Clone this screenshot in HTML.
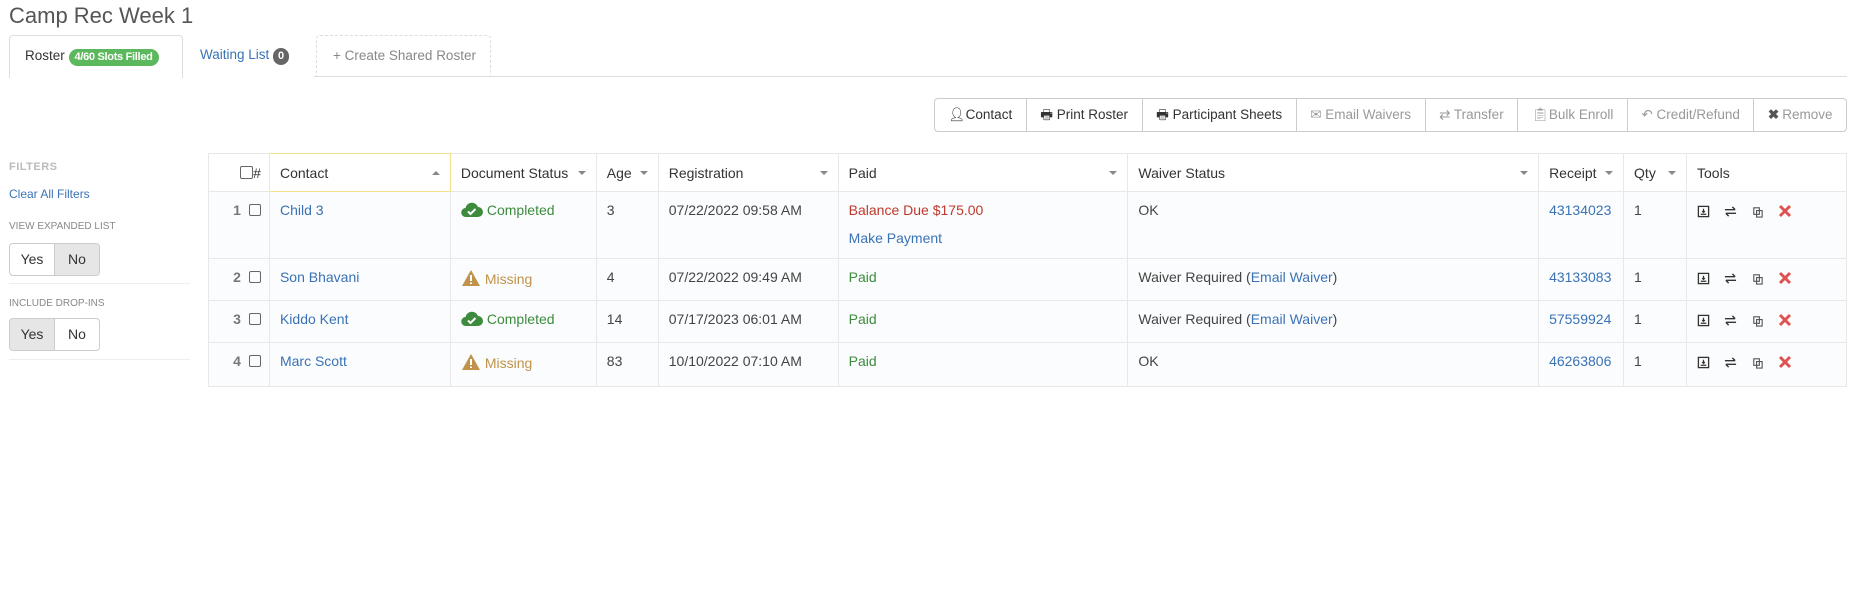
<!DOCTYPE html>
<html><head><meta charset="utf-8"><style>
*{box-sizing:border-box;margin:0;padding:0}
body{width:1856px;height:610px;background:#fff;font-family:"Liberation Sans",sans-serif;color:#444;font-size:14px;position:relative;overflow:hidden}
.a{position:absolute}
h1{position:absolute;left:9px;top:3px;font-size:22px;font-weight:normal;color:#555}
.tabline{left:9px;top:76px;width:1838px;height:1px;background:#ddd}
.tab{top:35px;height:42px;border:1px solid #ddd;border-bottom:none;border-radius:4px 4px 0 0;font-size:13.5px;line-height:40px;padding-left:15px;background:#fff}
.badge{display:inline-block;background:#5cb85c;color:#fff;font-weight:bold;font-size:11px;border-radius:10px;padding:0 6px;line-height:17px;letter-spacing:-.3px}
.btns{left:934px;top:98px;width:913px;height:34px;display:flex;border:1px solid #ccc;border-radius:4px}
.btns div{flex:auto;justify-content:center;border-right:1px solid #ccc;padding:0 6px;line-height:32px;font-size:13.5px;color:#333;white-space:nowrap;display:flex;align-items:center;gap:3px}
.btns div:last-child{border-right:none}
.btns .d{color:#999}
.side{color:#bbb;font-weight:bold;font-size:11px;letter-spacing:.5px}
.lbl{color:#888;font-size:10px}
.lnk{color:#3a72b5}
.yn{display:flex;height:33px;border:1px solid #ccc;border-radius:4px;width:91px;overflow:hidden}
.yn span{flex:1;text-align:center;line-height:31px;font-size:14px;color:#333}
.yn .on{background:#e6e6e6}
.yn span:first-child{border-right:1px solid #ccc}
table{position:absolute;left:208px;top:153px;border-collapse:collapse;width:1639px}
td,th{border:1px solid #e8e8e8;text-align:left;vertical-align:top;padding:0 10px;font-size:14px}
th{height:38px;vertical-align:middle;font-weight:normal;color:#333;position:relative}
tbody tr{background:#fbfcfd}
tbody td{padding-top:10px}
.car{position:absolute;right:10px;top:17px;border-left:4px solid transparent;border-right:4px solid transparent;border-top:4px solid #888}
.up{border-top:none;border-bottom:4px solid #888}
.num{text-align:right;color:#777;font-weight:bold;padding-right:8px}
.cb{display:inline-block;width:12px;height:12px;border:1px solid #666;border-radius:2px;margin-left:8px;vertical-align:-1px}
.g{color:#3d8b3d}.o{color:#c0924a}.r{color:#c0392b}
.ic{display:inline-block;vertical-align:-3px;margin-right:4px}
.tools svg{vertical-align:middle;margin-right:14px}
</style></head><body>
<h1>Camp Rec Week 1</h1>
<div class="a tabline"></div>
<div class="a tab" style="left:9px;width:174px;color:#333;height:43px">Roster <span class="badge">4/60 Slots Filled</span></div>
<div class="a tab lnk" style="left:183px;width:131px;border:none;padding-left:17px">Waiting List <span class="badge" style="background:#666;padding:0 5px">0</span></div>
<div class="a tab" style="left:316px;width:175px;border:1px dashed #ddd;border-bottom:0;color:#888;padding-left:16px;height:41px">+ Create Shared Roster</div>

<div class="a btns">
<div>&#128100;&#xFE0E;Contact</div><div>&#128438;&#xFE0E; Print Roster</div><div>&#128438;&#xFE0E; Participant Sheets</div><div class="d">&#9993; Email Waivers</div><div class="d">&#8644; Transfer</div><div class="d">&#128203;&#xFE0E;Bulk Enroll</div><div class="d">&#8630; Credit/Refund</div><div class="d"><b style="color:#555">&#10006;</b> Remove</div>
</div>

<div class="a side" style="left:9px;top:161px">FILTERS</div>
<div class="a lnk" style="left:9px;top:187px;font-size:12px">Clear All Filters</div>
<div class="a lbl" style="left:9px;top:221px">VIEW EXPANDED LIST</div>
<div class="a yn" style="left:9px;top:243px"><span>Yes</span><span class="on">No</span></div>
<div class="a" style="left:9px;top:283px;width:181px;height:1px;background:#eee"></div>
<div class="a lbl" style="left:9px;top:298px">INCLUDE DROP-INS</div>
<div class="a yn" style="left:9px;top:318px"><span class="on">Yes</span><span>No</span></div>
<div class="a" style="left:9px;top:359px;width:181px;height:1px;background:#eee"></div>

<table>
<colgroup><col style="width:61px"><col style="width:181px"><col style="width:146px"><col style="width:62px"><col style="width:180px"><col style="width:290px"><col style="width:411px"><col style="width:85px"><col style="width:63px"><col style="width:160px"></colgroup>
<thead><tr>
<th style="text-align:right;padding-right:8px"><span class="cb" style="margin:0;width:13px;height:13px"></span>#</th>
<th style="border:1px solid #f5e08a">Contact<span class="car up"></span></th>
<th>Document Status<span class="car"></span></th>
<th>Age<span class="car"></span></th>
<th>Registration<span class="car"></span></th>
<th>Paid<span class="car"></span></th>
<th>Waiver Status<span class="car"></span></th>
<th>Receipt<span class="car"></span></th>
<th>Qty<span class="car"></span></th>
<th>Tools</th>
</tr></thead>
<tbody>
<tr style="height:67px"><td class="num">1<span class="cb"></span></td><td class="lnk">Child 3</td><td class="g"><svg class="ic" width="22" height="16" viewBox="0 0 22 16"><path d="M5 15a4.5 4.5 0 0 1-.5-9A6.5 6.5 0 0 1 17 5a5 5 0 0 1 0 10z" fill="#3d8b3d"/><path d="M7 9.5l2.5 2.5 5-5" stroke="#fff" stroke-width="2" fill="none"/></svg>Completed</td><td>3</td><td>07/22/2022 09:58 AM</td><td><span class="r">Balance Due $175.00</span><div class="lnk" style="margin-top:12px">Make Payment</div></td><td>OK</td><td class="lnk">43134023</td><td>1</td><td class="tools">
<svg width="13" height="13" viewBox="0 0 14 14"><rect x="1.5" y="1.5" width="11" height="11" fill="none" stroke="#333" stroke-width="1.4"/><path d="M4 10h6M7 4v4M5.5 6.5L7 8l1.5-1.5" stroke="#333" stroke-width="1.3" fill="none"/></svg><svg width="13" height="13" viewBox="0 0 14 14"><path d="M1 5h11M9 2l3 3M13 9H2M5 12L2 9" stroke="#333" stroke-width="1.5" fill="none"/></svg><svg width="13" height="13" viewBox="0 0 14 14"><path d="M3 3h6v7H3zM6 6h6v7H6z" stroke="#555" stroke-width="1.2" fill="#fff"/></svg><svg width="14" height="14" viewBox="0 0 14 14"><path d="M2 2l10 10M12 2L2 12" stroke="#e05252" stroke-width="3"/></svg></td></tr>
<tr style="height:42px"><td class="num">2<span class="cb"></span></td><td class="lnk">Son Bhavani</td><td class="o"><svg class="ic" width="20" height="18" viewBox="0 0 20 18"><path d="M10 1L19 17H1z" fill="#c0924a"/><path d="M10 6v6M10 13.5v1.5" stroke="#fff" stroke-width="2"/></svg>Missing</td><td>4</td><td>07/22/2022 09:49 AM</td><td class="g">Paid</td><td>Waiver Required (<span class="lnk">Email Waiver</span>)</td><td class="lnk">43133083</td><td>1</td><td class="tools">
<svg width="13" height="13" viewBox="0 0 14 14"><rect x="1.5" y="1.5" width="11" height="11" fill="none" stroke="#333" stroke-width="1.4"/><path d="M4 10h6M7 4v4M5.5 6.5L7 8l1.5-1.5" stroke="#333" stroke-width="1.3" fill="none"/></svg><svg width="13" height="13" viewBox="0 0 14 14"><path d="M1 5h11M9 2l3 3M13 9H2M5 12L2 9" stroke="#333" stroke-width="1.5" fill="none"/></svg><svg width="13" height="13" viewBox="0 0 14 14"><path d="M3 3h6v7H3zM6 6h6v7H6z" stroke="#555" stroke-width="1.2" fill="#fff"/></svg><svg width="14" height="14" viewBox="0 0 14 14"><path d="M2 2l10 10M12 2L2 12" stroke="#e05252" stroke-width="3"/></svg></td></tr>
<tr style="height:42px"><td class="num">3<span class="cb"></span></td><td class="lnk">Kiddo Kent</td><td class="g"><svg class="ic" width="22" height="16" viewBox="0 0 22 16"><path d="M5 15a4.5 4.5 0 0 1-.5-9A6.5 6.5 0 0 1 17 5a5 5 0 0 1 0 10z" fill="#3d8b3d"/><path d="M7 9.5l2.5 2.5 5-5" stroke="#fff" stroke-width="2" fill="none"/></svg>Completed</td><td>14</td><td>07/17/2023 06:01 AM</td><td class="g">Paid</td><td>Waiver Required (<span class="lnk">Email Waiver</span>)</td><td class="lnk">57559924</td><td>1</td><td class="tools">
<svg width="13" height="13" viewBox="0 0 14 14"><rect x="1.5" y="1.5" width="11" height="11" fill="none" stroke="#333" stroke-width="1.4"/><path d="M4 10h6M7 4v4M5.5 6.5L7 8l1.5-1.5" stroke="#333" stroke-width="1.3" fill="none"/></svg><svg width="13" height="13" viewBox="0 0 14 14"><path d="M1 5h11M9 2l3 3M13 9H2M5 12L2 9" stroke="#333" stroke-width="1.5" fill="none"/></svg><svg width="13" height="13" viewBox="0 0 14 14"><path d="M3 3h6v7H3zM6 6h6v7H6z" stroke="#555" stroke-width="1.2" fill="#fff"/></svg><svg width="14" height="14" viewBox="0 0 14 14"><path d="M2 2l10 10M12 2L2 12" stroke="#e05252" stroke-width="3"/></svg></td></tr>
<tr style="height:44px"><td class="num">4<span class="cb"></span></td><td class="lnk">Marc Scott</td><td class="o"><svg class="ic" width="20" height="18" viewBox="0 0 20 18"><path d="M10 1L19 17H1z" fill="#c0924a"/><path d="M10 6v6M10 13.5v1.5" stroke="#fff" stroke-width="2"/></svg>Missing</td><td>83</td><td>10/10/2022 07:10 AM</td><td class="g">Paid</td><td>OK</td><td class="lnk">46263806</td><td>1</td><td class="tools">
<svg width="13" height="13" viewBox="0 0 14 14"><rect x="1.5" y="1.5" width="11" height="11" fill="none" stroke="#333" stroke-width="1.4"/><path d="M4 10h6M7 4v4M5.5 6.5L7 8l1.5-1.5" stroke="#333" stroke-width="1.3" fill="none"/></svg><svg width="13" height="13" viewBox="0 0 14 14"><path d="M1 5h11M9 2l3 3M13 9H2M5 12L2 9" stroke="#333" stroke-width="1.5" fill="none"/></svg><svg width="13" height="13" viewBox="0 0 14 14"><path d="M3 3h6v7H3zM6 6h6v7H6z" stroke="#555" stroke-width="1.2" fill="#fff"/></svg><svg width="14" height="14" viewBox="0 0 14 14"><path d="M2 2l10 10M12 2L2 12" stroke="#e05252" stroke-width="3"/></svg></td></tr>
</tbody></table>
</body></html>
